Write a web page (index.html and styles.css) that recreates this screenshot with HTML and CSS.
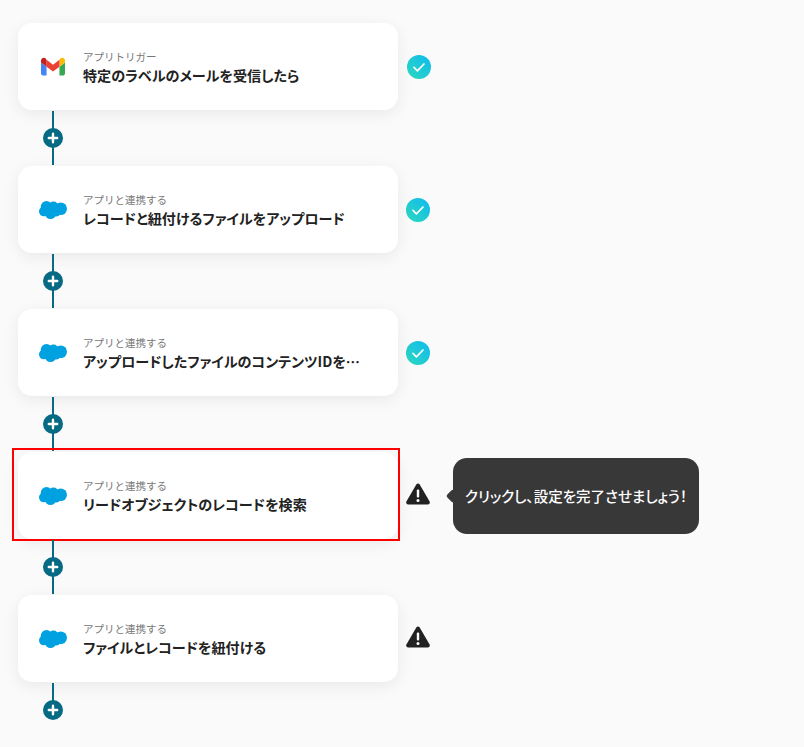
FILE: index.html
```html
<!DOCTYPE html>
<html lang="ja">
<head>
<meta charset="utf-8">
<title>フロー</title>
<link rel="stylesheet" href="styles.css">
</head>
<body>
<svg class="defs" width="0" height="0" aria-hidden="true">
  <defs>
    <linearGradient id="ok" x1="0" y1="1" x2="1" y2="0">
      <stop offset="0" stop-color="#2cd9bd"/>
      <stop offset="1" stop-color="#10b9f0"/>
    </linearGradient>
    <symbol id="sf" viewBox="0 0 28 20">
      <g fill="#00a1e0">
        <circle cx="7.500" cy="6.800" r="5.800"/>
        <circle cx="14.500" cy="6.500" r="5"/>
        <circle cx="21.700" cy="8.700" r="6.300"/>
        <circle cx="4.800" cy="11.500" r="4.800"/>
        <circle cx="11.500" cy="13.500" r="5.500"/>
        <circle cx="17" cy="12" r="4.500"/>
      </g>
    </symbol>
    <symbol id="check" viewBox="0 0 24 24">
      <circle cx="12" cy="12" r="12" fill="url(#ok)"/>
      <path d="M7 12.400l3.400 3.400L17 9" fill="none" stroke="#fff" stroke-width="1.700" stroke-linecap="round" stroke-linejoin="round"/>
    </symbol>
    <symbol id="warn" viewBox="0 0 24 22">
      <path fill="#222" d="M10.300 1.400c.8-1.300 2.600-1.300 3.400 0l9.900 17.200c.7 1.300-.2 2.900-1.700 2.900H2.100C.6 21.500-.3 19.900.4 18.600z"/>
      <rect x="10.800" y="6.500" width="2.400" height="8" rx="1" fill="#fff"/>
      <circle cx="12" cy="17.400" r="1.500" fill="#fff"/>
    </symbol>
    <symbol id="plus" viewBox="0 0 20 20">
      <circle cx="10" cy="10" r="10" fill="#066a85"/>
      <path d="M10 5.800v8.400M5.800 10h8.400" stroke="#fff" stroke-width="2.400" stroke-linecap="round"/>
    </symbol>
  </defs>
</svg>
<main class="flow">
  <section class="step">
    <article class="card">
      <svg class="logo" viewBox="-2.150 0 30.300 21.700" aria-hidden="true">
        <path fill="#4285f4" d="M2 20h4V10.500L0 6v12c0 1.100.9 2 2 2z"/>
        <path fill="#34a853" d="M20 20h4c1.100 0 2-.9 2-2V6l-6 4.500z"/>
        <path fill="#fbbc04" d="M20 3v7.500L26 6V3.800c0-2.500-2.800-3.900-4.800-2.400z"/>
        <path fill="#ea4335" d="M6 10.500V3l7 5.300L20 3v7.500l-7 5.200z"/>
        <path fill="#c5221f" d="M0 3.800V6l6 4.500V3L4.800 1.400C2.800-.1 0 1.300 0 3.800z"/>
      </svg>
      <div class="text">
        <p class="kind">アプリトリガー</p>
        <h2 class="title">特定のラベルのメールを受信したら</h2>
      </div>
    </article>
    <svg class="status status-first"><use href="#check"/></svg>
  </section>
  <div class="link"><svg class="add"><use href="#plus"/></svg></div>

  <section class="step">
    <article class="card">
      <svg class="logo"><use href="#sf"/></svg>
      <div class="text">
        <p class="kind">アプリと連携する</p>
        <h2 class="title">レコードと紐付けるファイルをアップロード</h2>
      </div>
    </article>
    <svg class="status"><use href="#check"/></svg>
  </section>
  <div class="link"><svg class="add"><use href="#plus"/></svg></div>

  <section class="step">
    <article class="card">
      <svg class="logo"><use href="#sf"/></svg>
      <div class="text">
        <p class="kind">アプリと連携する</p>
        <h2 class="title">アップロードしたファイルのコンテンツIDを取得する</h2>
      </div>
    </article>
    <svg class="status"><use href="#check"/></svg>
  </section>
  <div class="link"><svg class="add"><use href="#plus"/></svg></div>

  <section class="step">
    <article class="card">
      <svg class="logo"><use href="#sf"/></svg>
      <div class="text">
        <p class="kind">アプリと連携する</p>
        <h2 class="title">リードオブジェクトのレコードを検索</h2>
      </div>
      <div class="highlight"></div>
    </article>
    <svg class="status warn"><use href="#warn"/></svg>
    <div class="tip">クリックし、設定を完了させましょう！</div>
  </section>
  <div class="link"><svg class="add"><use href="#plus"/></svg></div>

  <section class="step">
    <article class="card">
      <svg class="logo"><use href="#sf"/></svg>
      <div class="text">
        <p class="kind">アプリと連携する</p>
        <h2 class="title">ファイルとレコードを紐付ける</h2>
      </div>
    </article>
    <svg class="status warn"><use href="#warn"/></svg>
  </section>
  <div class="link link-end"><svg class="add"><use href="#plus"/></svg></div>
</main>
</body>
</html>
```
FILE: styles.css
```css
* { box-sizing: border-box; }
html, body { height: 100%; }
body {
  margin: 0;
  background: #fafafa;
  font-family: "Noto Sans CJK JP", "Noto Sans", sans-serif;
  overflow: hidden;
}
.defs { position: absolute; }
.flow {
  display: flex;
  flex-direction: column;
  padding: 23px 0 0 18px;
}
.step {
  position: relative;
  display: flex;
  align-items: center;
  gap: 8px;
}
.card {
  position: relative;
  display: flex;
  align-items: center;
  gap: 16px;
  width: 380px;
  height: 87px;
  padding: 0 30px 0 21px;
  background: #fff;
  border-radius: 14px;
  box-shadow: 0 4px 16px rgba(0, 0, 0, 0.07);
}
.logo { flex: none; width: 28px; height: 20px; }
.text { flex: 1; min-width: 0; padding-top: 1px; }
.kind {
  margin: 0;
  font-size: 10.500px;
  line-height: 14px;
  color: #777;
}
.title {
  margin: 1px 0 0;
  font-size: 14.100px;
  line-height: 20px;
  font-weight: 700;
  color: #222;
  font-feature-settings: "palt";
  white-space: nowrap;
  overflow: hidden;
  text-overflow: ellipsis;
}
.status { flex: none; width: 24px; height: 24px; }
.status-first { margin-left: 1px; }
.warn { height: 22px; margin-top: -3px; }
.highlight {
  position: absolute;
  inset: -4px -2px -2px -6px;
  border: 2px solid #f00;
}
.tip {
  position: absolute;
  left: 435px;
  top: 6px;
  width: 246px;
  height: 76px;
  display: flex;
  align-items: center;
  justify-content: center;
  padding-bottom: 2px;
  background: #383838;
  border-radius: 14px;
  color: #fff;
  font-size: 14.500px;
  font-weight: 500;
  font-feature-settings: "palt";
  white-space: nowrap;
}
.tip::before {
  content: "";
  position: absolute;
  left: -5px;
  top: 33px;
  width: 10px;
  height: 10px;
  background: #383838;
  transform: rotate(45deg);
  border-radius: 2px;
}
.link {
  position: relative;
  width: 70px;
  height: 56px;
  display: flex;
  align-items: center;
  justify-content: center;
}
.link::before {
  content: "";
  position: absolute;
  left: 34px;
  top: 1px;
  bottom: 1px;
  width: 2px;
  background: #066a85;
}
.link-end::before { bottom: 50%; }
.add { position: relative; width: 20px; height: 20px; }
```
